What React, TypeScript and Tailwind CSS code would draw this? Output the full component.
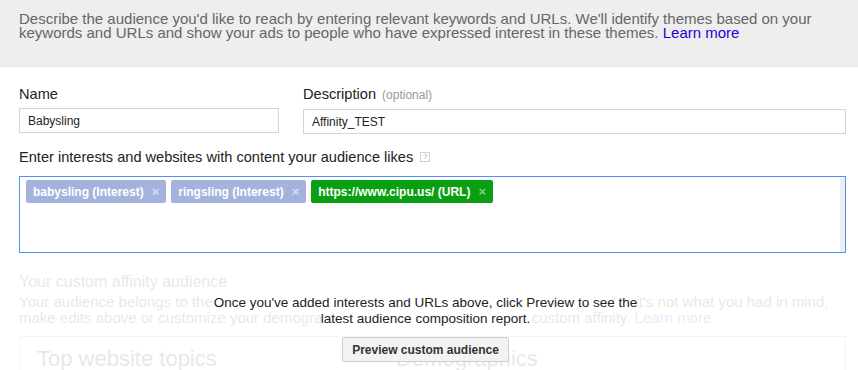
import React from "react";

type Chip = { label: string; kind: "interest" | "url" };

const chips: Chip[] = [
  { label: "babysling (Interest)", kind: "interest" },
  { label: "ringsling (Interest)", kind: "interest" },
  { label: "https://www.cipu.us/ (URL)", kind: "url" },
];

function Tag({ chip }: { chip: Chip }) {
  const isUrl = chip.kind === "url";
  return (
    <div
      className={`h-[23px] flex items-center gap-[8px] pl-[7px] pr-[7px] rounded-[2px] text-[12px] font-bold text-white ${
        isUrl ? "bg-[#0a9e12]" : "bg-[#a3b3de]"
      }`}
    >
      <span>{chip.label}</span>
      <span className={`text-[13px] font-bold leading-none ${isUrl ? "text-[#7fd08a]" : "text-[#d4dcf0]"}`}>×</span>
    </div>
  );
}

export default function App() {
  return (
    <div className="w-[858px] h-[370px] overflow-hidden bg-white font-['Liberation_Sans',Arial,sans-serif]">
      {/* intro banner */}
      <div className="h-[67px] bg-[#eeeeee] border-b border-[#e3e3e3] pl-[19px] pr-[20px] pt-[12px] text-[15px] leading-[14px] text-[#666666]">
        Describe the audience you'd like to reach by entering relevant keywords and URLs. We'll identify themes based on your
        keywords and URLs and show your ads to people who have expressed interest in these themes.{" "}
        <span className="text-[#2200dd]">Learn more</span>
      </div>

      <div className="pl-[19px] pr-[12px] pt-[18px]">
        {/* name + description */}
        <div className="flex gap-[24px]">
          <div className="w-[260px] flex flex-col">
            <label className="text-[14.6px] leading-[18px] text-[#222222] mb-[5px]">Name</label>
            <div className="h-[25px] border border-[#d4d4d4] px-[8px] flex items-center text-[12px] text-[#222222]">Babysling</div>
          </div>
          <div className="flex-1 flex flex-col">
            <label className="text-[14.6px] leading-[18px] text-[#222222] mb-[5px]">
              Description <span className="text-[12px] text-[#999999] ml-[2px]">(optional)</span>
            </label>
            <div className="h-[25px] border border-[#d4d4d4] px-[8px] flex items-center text-[12px] text-[#222222]">Affinity_TEST</div>
          </div>
        </div>

        {/* interests */}
        <div className="mt-[14px] mb-[10px] flex items-center gap-[7px] text-[14.6px] leading-[18px] text-[#222222]">
          <span>Enter interests and websites with content your audience likes</span>
          <span className="w-[10px] h-[10px] border border-[#d0d0d0] text-[8px] leading-[8px] text-[#aaaaaa] flex items-center justify-center">?</span>
        </div>
        <div className="h-[77px] border border-[#4d90fe] flex">
          <div className="flex-1 flex items-start gap-[5px] pl-[6px] pt-[3px]">
            {chips.map((c) => (
              <Tag key={c.label} chip={c} />
            ))}
          </div>
          <div className="w-[5px] bg-[#eeeeee] mt-[1px]" />
        </div>

        {/* faded preview area with overlay */}
        <div className="relative">
          <div className="opacity-[0.1] text-[#222222]">
            <div className="mt-[19px] text-[16px] leading-[20px]">Your custom affinity audience</div>
            <div className="mt-[2px] text-[15px] leading-[16px]">
              Your audience belongs to these website topics and demographics based on your interests. If it's not what you had in mind,
              make edits above or customize your demographics targeting options for your custom affinity.{" "}
              <span className="text-[#2255dd]">Learn more</span>
            </div>
            <div className="mt-[10px] h-[60px] border border-[#999999] flex">
              <div className="w-[376px] pl-[17px] pt-[9px] text-[22px] leading-[26px]">Top website topics</div>
              <div className="pt-[9px] text-[22px] leading-[26px]">Demographics</div>
            </div>
          </div>

          <div className="absolute left-0 right-0 top-[23px] flex flex-col items-center pr-[14px]">
            <p className="text-[13.5px] leading-[16px] text-[#222222] text-center">
              <span className="bg-white">Once you've added interests and URLs above, click Preview to see the</span>
              <br />
              <span className="bg-white">latest audience composition report.</span>
            </p>
            <button className="mt-[10px] h-[25px] px-[9px] border border-[#cfcfcf] bg-[#f3f3f3] rounded-[2px] text-[12px] font-bold text-[#333333]">
              Preview custom audience
            </button>
          </div>
        </div>
      </div>
    </div>
  );
}
